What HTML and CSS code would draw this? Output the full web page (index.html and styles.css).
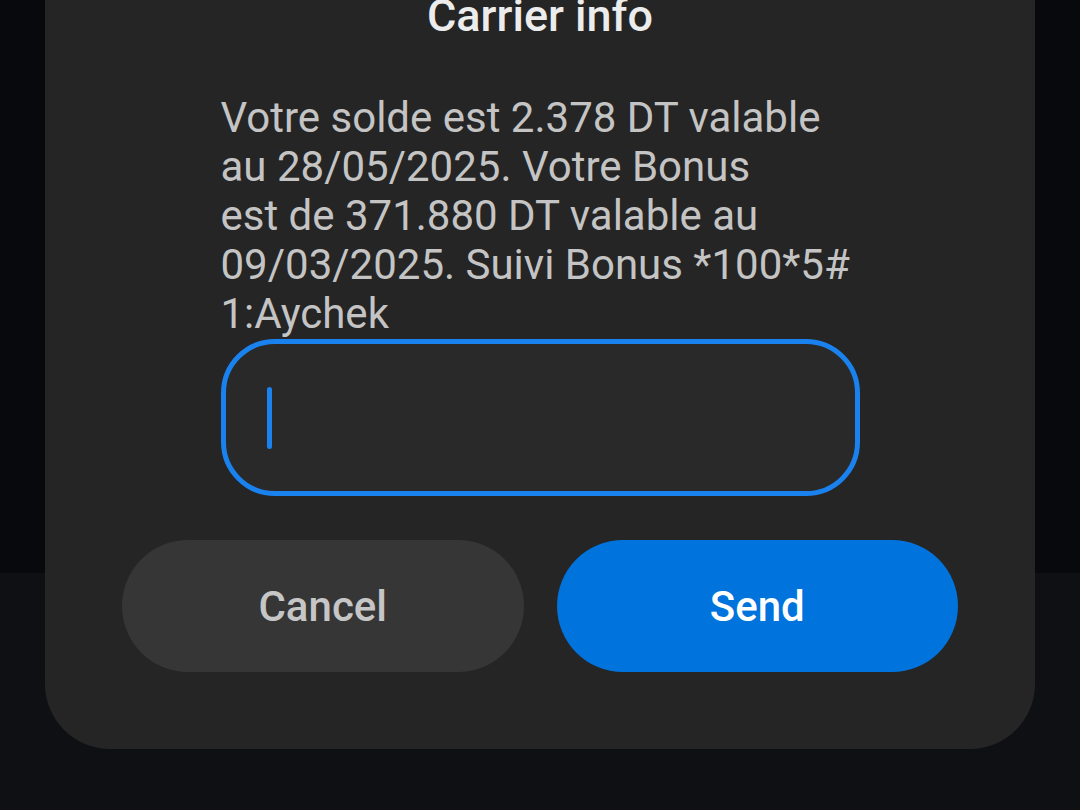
FILE: index.html
```html
<!DOCTYPE html>
<html>
<head>
<meta charset="utf-8">
<link rel="stylesheet" href="styles.css">
</head>
<body>
<div class="screen">
  <div class="dialog">
    <div class="title">Carrier info</div>
    <div class="message">Votre solde est 2.378 DT valable<br>au 28/05/2025. Votre Bonus<br>est de 371.880 DT valable au<br>09/03/2025. Suivi Bonus *100*5#<br>1:Aychek</div>
    <div class="input"><span class="cursor"></span></div>
    <div class="actions">
      <div class="btn btn-cancel">Cancel</div>
      <div class="btn btn-send">Send</div>
    </div>
  </div>
</div>
</body>
</html>
```

FILE: styles.css
```css
html, body {
  margin: 0;
  padding: 0;
}
body {
  font-family: Roboto, "Noto Sans", "Liberation Sans", sans-serif;
  background: #0f1014;
}
.screen {
  width: 1080px;
  height: 810px;
  overflow: hidden;
  background: linear-gradient(to bottom, #07090c 0, #07090c 573px, #0f1014 573px, #0f1014 100%);
}
.dialog {
  margin: -40px 45px 0;
  padding: 31px 0 77px;
  background: #252525;
  border-radius: 0 0 65px 65px;
}
.title {
  font-size: 45px;
  line-height: 49px;
  font-weight: 500;
  color: #ececec;
  text-align: center;
}
.message {
  width: 639px;
  margin: 53px auto 0;
  font-size: 42px;
  line-height: 49px;
  color: #c4c4c4;
  white-space: nowrap;
}
.input {
  box-sizing: border-box;
  width: 639px;
  height: 157px;
  margin: 1px auto 0;
  border: 5px solid #1a82ee;
  border-radius: 54px;
  background: #292929;
  display: flex;
  align-items: center;
  padding-left: 41px;
}
.cursor {
  display: block;
  width: 5px;
  height: 62px;
  border-radius: 3px;
  background: #1a82ee;
}
.actions {
  display: flex;
  gap: 33px;
  padding: 0 77px;
  margin-top: 44px;
}
.btn {
  flex: 1;
  height: 132px;
  border-radius: 66px;
  display: flex;
  align-items: center;
  justify-content: center;
  font-size: 42px;
  font-weight: 500;
}
.btn-cancel {
  background: #363636;
  color: #c6c6c6;
}
.btn-send {
  background: #0073dc;
  color: #ffffff;
}
```
